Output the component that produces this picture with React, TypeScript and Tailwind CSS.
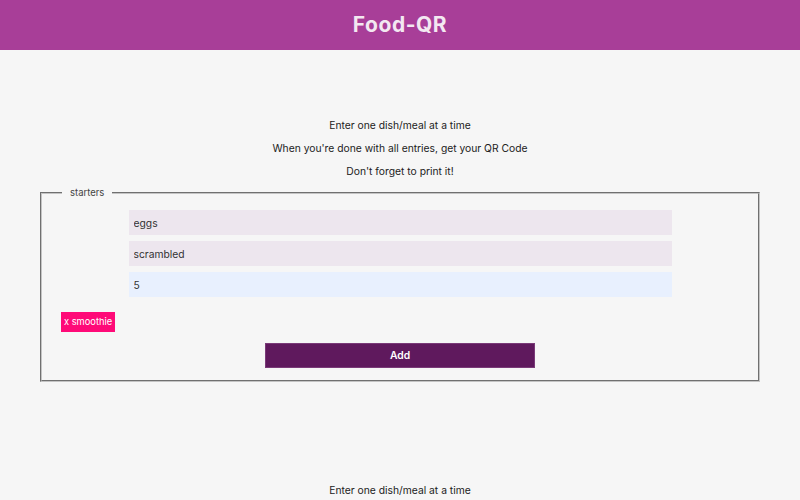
import React from "react";

function Section() {
  return (
    <section className="flex flex-col items-center">
      <div className="flex flex-col items-center gap-[9px] text-[10.3px] text-[#222] leading-[14px]">
        <p>Enter one dish/meal at a time</p>
        <p>When you're done with all entries, get your QR Code</p>
        <p>Don't forget to print it!</p>
      </div>
      <fieldset className="mt-[8px] w-[720px] border-2 [border-style:groove] border-[#c4c4c4] px-5 pb-[12px]">
        <legend className="px-2 text-[9.5px] text-[#444]">starters</legend>
        <div className="flex flex-col items-center gap-[6px] mt-[10px]">
          <input
            className="w-[543px] h-[25px] bg-[#ede6ee] px-[5px] text-[10.3px] text-[#333] outline-none"
            defaultValue="eggs"
          />
          <input
            className="w-[543px] h-[25px] bg-[#ede6ee] px-[5px] text-[10.3px] text-[#333] outline-none"
            defaultValue="scrambled"
          />
          <input
            className="w-[543px] h-[25px] bg-[#e8f0fe] px-[5px] text-[10.3px] text-[#333] outline-none"
            defaultValue="5"
          />
        </div>
        <div className="mt-[15px] flex">
          <span className="-ml-[1px] h-[20px] flex items-center bg-[#ff0a78] text-white text-[9.3px] px-[3px]">
            x smoothie
          </span>
        </div>
        <div className="flex justify-center mt-[11px]">
          <button className="w-[270px] h-[25px] bg-[#5f195d] border border-[#7a3a78] text-white text-[10.3px] font-semibold">
            Add
          </button>
        </div>
      </fieldset>
    </section>
  );
}

export default function App() {
  return (
    <div className="min-h-screen bg-[#f6f6f6] font-['Inter',sans-serif]">
      <header className="h-[50px] bg-[#a83e98] flex items-center justify-center">
        <h1 className="text-[21px] font-bold text-[#f3e8f1] tracking-wide">Food-QR</h1>
      </header>
      <main className="flex flex-col gap-[101px] pt-[68px]">
        <Section />
        <Section />
      </main>
    </div>
  );
}
